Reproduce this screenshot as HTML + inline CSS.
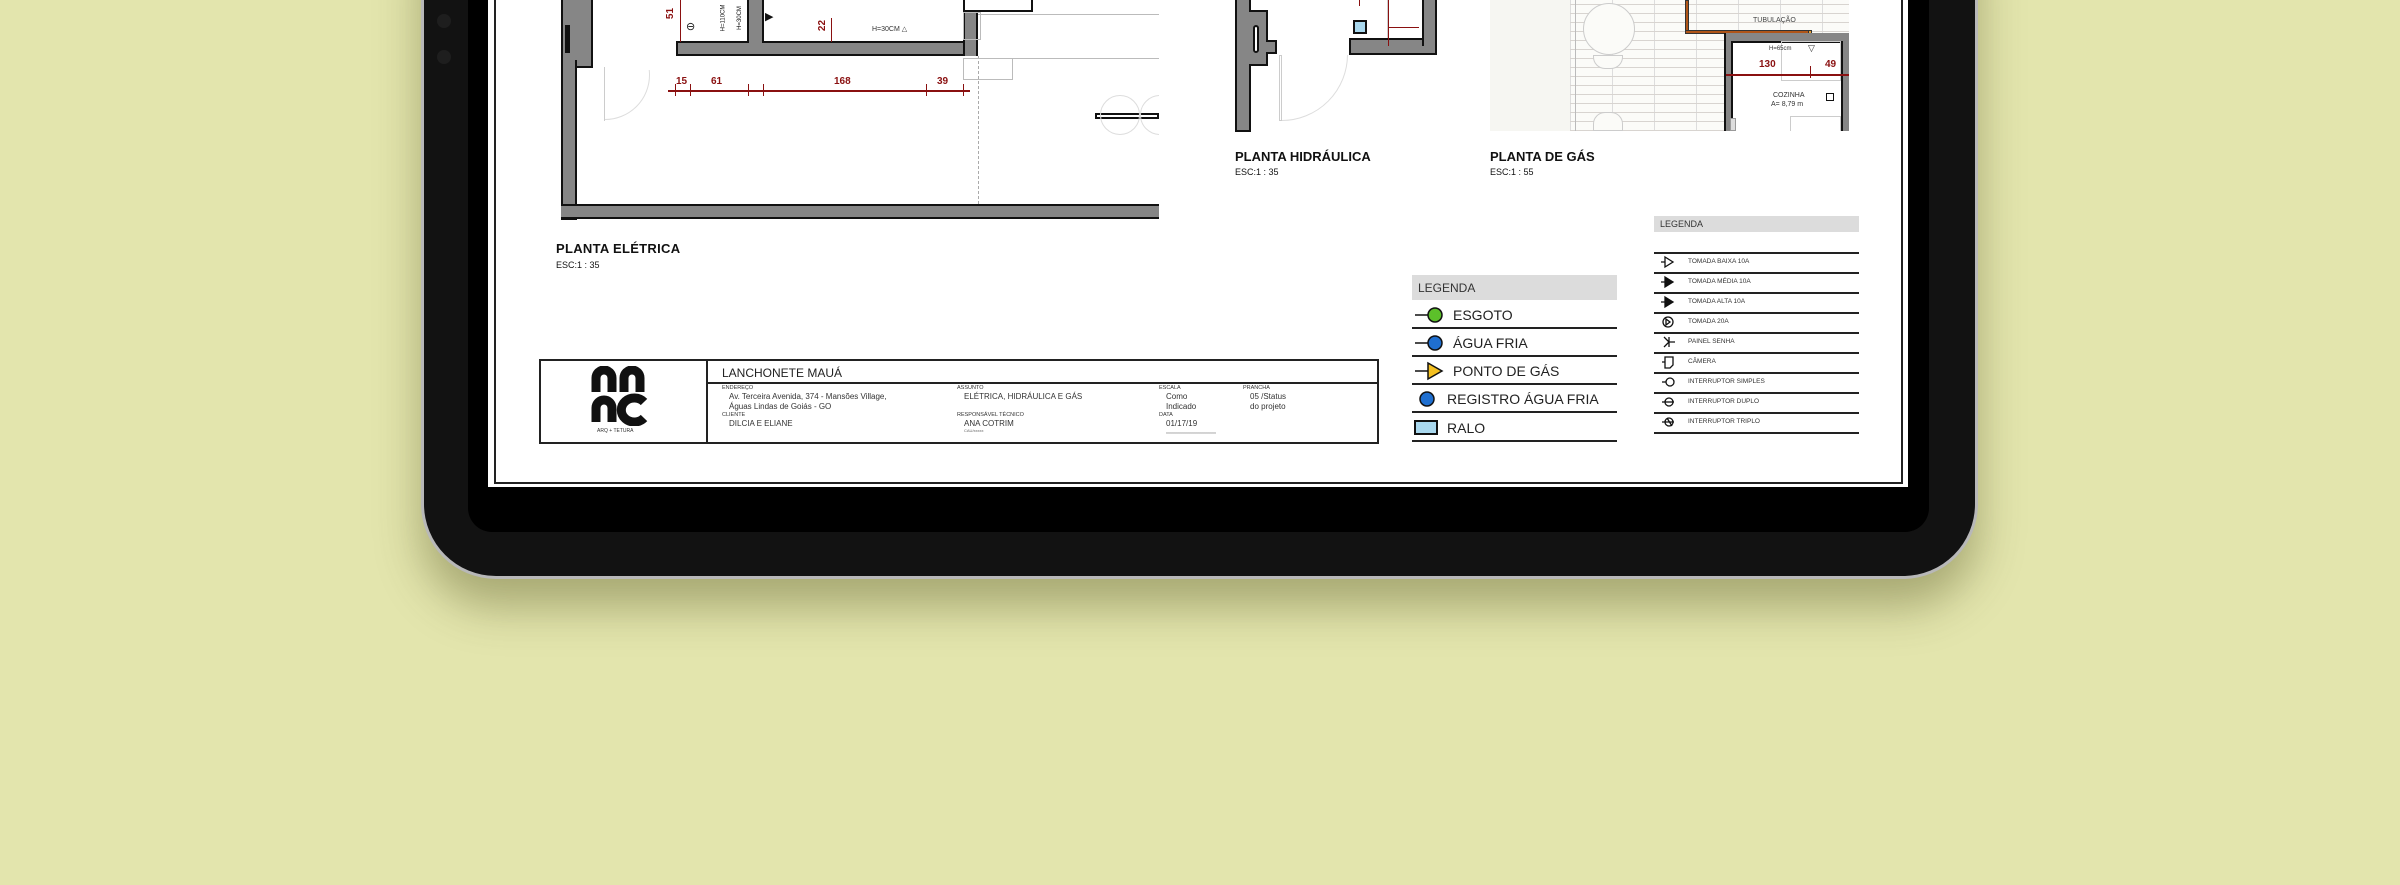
<!DOCTYPE html>
<html><head><meta charset="utf-8"><style>
*{margin:0;padding:0;box-sizing:border-box}
body{width:2400px;height:885px;background:#e3e5ad;position:relative;overflow:hidden;font-family:"Liberation Sans",sans-serif}
.a{position:absolute}
.wall{position:absolute;background:#868686;border:2px solid #111}
.t{position:absolute;white-space:nowrap;color:#111}
.red{color:#8a1010;font-weight:bold}
</style></head><body>
<!-- tablet body -->
<div class="a" style="left:421px;top:-120px;width:1557px;height:699px;border-radius:75px;background:#b8b8b8;box-shadow:0 28px 45px rgba(70,72,20,0.38)"></div>
<div class="a" style="left:424px;top:-120px;width:1551px;height:696px;border-radius:72px;background:#121212;"></div>
<div class="a" style="left:437px;top:14px;width:14px;height:14px;border-radius:50%;background:#1e1e1e"></div>
<div class="a" style="left:437px;top:50px;width:14px;height:14px;border-radius:50%;background:#1e1e1e"></div>
<!-- bezel -->
<div class="a" style="left:468px;top:-50px;width:1461px;height:582px;border-radius:24px;background:#000"></div>
<!-- screen -->
<div class="a" style="left:488px;top:0;width:1420px;height:487px;background:#fff"></div>
<div class="a" style="left:494px;top:-5px;width:1409px;height:489px;border:2px solid #222;border-top:none"></div>

<!-- ELETRICA plan -->
<div class="wall" style="left:561px;top:-4px;width:32px;height:72px;border-right:2px solid #111"></div>
<div class="wall" style="left:561px;top:60px;width:16px;height:160px;border-top:none"></div>
<div class="a" style="left:565px;top:25px;width:5px;height:28px;background:#111"></div>
<div class="wall" style="left:561px;top:204px;width:598px;height:15px;border-right:none;border-left:none"></div>
<div class="wall" style="left:676px;top:41px;width:302px;height:15px"></div>
<div class="wall" style="left:963px;top:10px;width:15px;height:46px;border-bottom:none"></div>
<div class="wall" style="left:747px;top:-4px;width:17px;height:47px;border-bottom:none"></div>
<div class="a" style="left:978px;top:56px;width:0;height:148px;border-left:1px dashed #aaa"></div>
<div class="a" style="left:978px;top:14px;width:181px;height:1px;background:#bbb"></div>
<div class="a" style="left:978px;top:58px;width:181px;height:1px;background:#bbb"></div>
<div class="a" style="left:963px;top:58px;width:50px;height:22px;border:1px solid #bbb"></div>
<div class="a" style="left:963px;top:12px;width:18px;height:28px;border:1px solid #bbb"></div>
<div class="a" style="left:963px;top:-2px;width:70px;height:14px;border:2px solid #111;background:#fff"></div>
<div class="a" style="left:604px;top:67px;width:1px;height:54px;background:#ccc"></div>
<div class="a" style="left:560px;top:30px;width:90px;height:90px;border-radius:50%;border:1px solid #ddd;clip-path:inset(40px 0 0 45px)"></div>
<!-- dim line -->
<div class="a" style="left:668px;top:90px;width:302px;height:2px;background:#8a1010"></div>
<div class="a" style="left:675px;top:84px;width:1px;height:12px;background:#8a1010"></div>
<div class="a" style="left:690px;top:84px;width:1px;height:12px;background:#8a1010"></div>
<div class="a" style="left:748px;top:84px;width:1px;height:12px;background:#8a1010"></div>
<div class="a" style="left:763px;top:84px;width:1px;height:12px;background:#8a1010"></div>
<div class="a" style="left:926px;top:84px;width:1px;height:12px;background:#8a1010"></div>
<div class="a" style="left:963px;top:84px;width:1px;height:12px;background:#8a1010"></div>
<div class="t red" style="left:676px;top:76px;font-size:10px">15</div>
<div class="t red" style="left:711px;top:76px;font-size:10px">61</div>
<div class="t red" style="left:834px;top:76px;font-size:10px">168</div>
<div class="t red" style="left:937px;top:76px;font-size:10px">39</div>
<div class="a" style="left:680px;top:0;width:1px;height:42px;background:#8a1010"></div>
<div class="t red" style="left:665px;top:8px;font-size:10px;transform:rotate(-90deg)">51</div>
<div class="a" style="left:831px;top:18px;width:1px;height:24px;background:#8a1010"></div>
<div class="t red" style="left:817px;top:20px;font-size:10px;transform:rotate(-90deg)">22</div>
<div class="t" style="left:710px;top:15px;font-size:6px;transform:rotate(-90deg)">H=110CM</div>
<div class="t" style="left:728px;top:15px;font-size:6px;transform:rotate(-90deg)">H=30CM</div>
<div class="t" style="left:872px;top:25px;font-size:7px;color:#333">H=30CM △</div>
<div class="t" style="left:686px;top:20px;font-size:11px">⊖</div>
<div class="t" style="left:765px;top:10px;font-size:11px">▶</div>
<div class="a" style="left:1095px;top:113px;width:64px;height:6px;border:2px solid #111"></div>
<div class="a" style="left:1100px;top:95px;width:40px;height:40px;border-radius:50%;border:1px solid #ddd"></div>
<div class="a" style="left:1140px;top:95px;width:40px;height:40px;border-radius:50%;border:1px solid #ddd;clip-path:inset(0 21px 0 0)"></div>
<div class="t" style="left:556px;top:241px;font-size:13px;font-weight:bold;letter-spacing:0.3px">PLANTA ELÉTRICA</div>
<div class="t" style="left:556px;top:260px;font-size:9px">ESC:1 : 35</div>

<!-- HIDRAULICA -->
<div class="wall" style="left:1235px;top:-4px;width:16px;height:136px"></div>
<div class="wall" style="left:1249px;top:10px;width:19px;height:56px;border-left:none"></div>
<div class="a" style="left:1253px;top:25px;width:6px;height:28px;border:2px solid #111;border-radius:3px;background:#fff"></div>
<div class="a" style="left:1266px;top:40px;width:11px;height:14px;background:#868686;border:2px solid #111;border-left:none"></div>
<div class="a" style="left:1279px;top:55px;width:3px;height:66px;border:1px solid #ccc"></div>
<div class="a" style="left:1215px;top:-12px;width:133px;height:133px;border-radius:50%;border:1px solid #ddd;clip-path:inset(67px 0 0 67px)"></div>
<div class="wall" style="left:1349px;top:38px;width:88px;height:17px"></div>
<div class="wall" style="left:1422px;top:-4px;width:15px;height:50px;border-bottom:none"></div>
<div class="a" style="left:1353px;top:20px;width:14px;height:14px;border:2px solid #111;background:#a9d8ee"></div>
<div class="a" style="left:1387px;top:0;width:34px;height:38px;border-left:1px solid #ccc"></div>
<div class="a" style="left:1389px;top:27px;width:30px;height:1px;background:#8a1010"></div>
<div class="a" style="left:1388px;top:0;width:1px;height:46px;background:#8a1010"></div>
<div class="a" style="left:1359px;top:0;width:1px;height:6px;background:#8a1010"></div>
<div class="t" style="left:1235px;top:149px;font-size:13px;font-weight:bold">PLANTA HIDRÁULICA</div>
<div class="t" style="left:1235px;top:167px;font-size:9px">ESC:1 : 35</div>

<!-- GAS -->
<div class="a" style="left:1490px;top:0;width:359px;height:131px;background:#f6f6f2;overflow:hidden">
 <div class="a" style="left:80px;top:0;width:279px;height:131px;background-color:#fbfbf8;background-image:repeating-linear-gradient(0deg,#d8d4d0 0 1px,transparent 1px 9px),repeating-linear-gradient(90deg,#ddd 0 1px,transparent 1px 42px)"></div>
 <div class="a" style="left:85px;top:0;width:1px;height:131px;background:#bbb"></div>
 <div class="a" style="left:93px;top:3px;width:52px;height:52px;border-radius:50%;border:1px solid #ccc;background:#fbfbf8"></div>
 <div class="a" style="left:103px;top:55px;width:30px;height:14px;border:1px solid #ccc;border-radius:0 0 12px 12px;background:#fbfbf8"></div>
 <div class="a" style="left:103px;top:112px;width:30px;height:19px;border:1px solid #ccc;border-radius:12px 12px 0 0;background:#fbfbf8"></div>
 <div class="a" style="left:195px;top:0;width:4px;height:34px;background:#b05518;border:1px solid #333"></div>
 <div class="a" style="left:195px;top:30px;width:126px;height:4px;background:#b05518;border:1px solid #333"></div>
 <div class="a" style="left:318px;top:30px;width:4px;height:12px;background:#e8a030;border:1px solid #333"></div>
 <div class="t" style="left:263px;top:17px;font-size:7px;color:#444">TUBULAÇÃO</div>
 <div class="a" style="left:234px;top:33px;width:125px;height:100px;background:#868686;border-left:2px solid #111"></div>
 <div class="a" style="left:241px;top:41px;width:112px;height:92px;background:#fff;border:2px solid #111;border-bottom:none"></div>
 <div class="a" style="left:291px;top:41px;width:60px;height:40px;border:1px solid #ccc"></div>
 <div class="t" style="left:279px;top:46px;font-size:6px;color:#333">H=65cm</div>
 <div class="t" style="left:318px;top:43px;font-size:9px;color:#333">▽</div>
 <div class="a" style="left:236px;top:74px;width:123px;height:2px;background:#8a1010"></div>
 <div class="a" style="left:320px;top:66px;width:1px;height:12px;background:#8a1010"></div>
 <div class="t red" style="left:269px;top:59px;font-size:10px">130</div>
 <div class="t red" style="left:335px;top:59px;font-size:10px">49</div>
 <div class="t" style="left:283px;top:92px;font-size:7px;color:#333">COZINHA</div>
 <div class="t" style="left:281px;top:101px;font-size:7px;color:#333">A= 8,79 m</div>
 <div class="a" style="left:336px;top:93px;width:8px;height:8px;border:1px solid #111"></div>
 <div class="a" style="left:300px;top:116px;width:51px;height:17px;border:1px solid #ccc"></div>
 <div class="a" style="left:240px;top:118px;width:6px;height:13px;background:#ddd;border:1px solid #999"></div>
</div>
<div class="t" style="left:1490px;top:149px;font-size:13px;font-weight:bold">PLANTA DE GÁS</div>
<div class="t" style="left:1490px;top:167px;font-size:9px">ESC:1 : 55</div>

<!-- LEGENDA 1 -->
<div class="a" style="left:1412px;top:275px;width:205px;height:25px;background:#dcdcdc"></div>
<div class="t" style="left:1418px;top:281px;font-size:12px;color:#333">LEGENDA</div>
<div class="a" style="left:1412px;top:327px;width:205px;height:2px;background:#222"></div>
<div class="a" style="left:1412px;top:355px;width:205px;height:2px;background:#222"></div>
<div class="a" style="left:1412px;top:383px;width:205px;height:2px;background:#222"></div>
<div class="a" style="left:1412px;top:411px;width:205px;height:2px;background:#222"></div>
<div class="a" style="left:1412px;top:440px;width:205px;height:2px;background:#222"></div>
<svg class="a" style="left:1412px;top:300px" width="40" height="140">
 <line x1="3" y1="15" x2="16" y2="15" stroke="#111" stroke-width="1.5"/><circle cx="23" cy="15" r="7" fill="#5cc02a" stroke="#111" stroke-width="1.5"/>
 <line x1="3" y1="43" x2="16" y2="43" stroke="#111" stroke-width="1.5"/><circle cx="23" cy="43" r="7" fill="#1f6fd0" stroke="#111" stroke-width="1.5"/>
 <line x1="3" y1="71" x2="16" y2="71" stroke="#111" stroke-width="1.5"/><polygon points="16,63 30,71 16,79" fill="#f4c020" stroke="#111" stroke-width="1.5"/>
 <circle cx="15" cy="99" r="7" fill="#1f6fd0" stroke="#111" stroke-width="1.5"/>
 <rect x="3" y="121" width="22" height="13" fill="#a9d8ee" stroke="#111" stroke-width="2"/>
</svg>
<div class="t" style="left:1453px;top:307px;font-size:14px;color:#222">ESGOTO</div>
<div class="t" style="left:1453px;top:335px;font-size:14px;color:#222">ÁGUA FRIA</div>
<div class="t" style="left:1453px;top:363px;font-size:14px;color:#222">PONTO DE GÁS</div>
<div class="t" style="left:1447px;top:391px;font-size:14px;color:#222">REGISTRO ÁGUA FRIA</div>
<div class="t" style="left:1447px;top:420px;font-size:14px;color:#222">RALO</div>

<!-- LEGENDA 2 -->
<div class="a" style="left:1654px;top:216px;width:205px;height:16px;background:#dcdcdc"></div>
<div class="t" style="left:1660px;top:219px;font-size:9px;color:#333">LEGENDA</div>
<div class="a" style="left:1654px;top:252px;width:205px;height:1.5px;background:#222"></div>
<div class="a" style="left:1654px;top:272px;width:205px;height:1.5px;background:#222"></div>
<div class="a" style="left:1654px;top:292px;width:205px;height:1.5px;background:#222"></div>
<div class="a" style="left:1654px;top:312px;width:205px;height:1.5px;background:#222"></div>
<div class="a" style="left:1654px;top:332px;width:205px;height:1.5px;background:#222"></div>
<div class="a" style="left:1654px;top:352px;width:205px;height:1.5px;background:#222"></div>
<div class="a" style="left:1654px;top:372px;width:205px;height:1.5px;background:#222"></div>
<div class="a" style="left:1654px;top:392px;width:205px;height:1.5px;background:#222"></div>
<div class="a" style="left:1654px;top:412px;width:205px;height:1.5px;background:#222"></div>
<div class="a" style="left:1654px;top:432px;width:205px;height:1.5px;background:#222"></div>
<svg class="a" style="left:1656px;top:253px" width="24" height="180" fill="none" stroke="#111" stroke-width="1.3">
 <path d="M5 9h4M9 4v10l8-5z"/>
 <path d="M5 29h4M9 24v10l8-5z" fill="#111"/>
 <path d="M5 49h4M9 44v10l8-5z" fill="#111"/>
 <circle cx="12" cy="69" r="5"/><path d="M10 66v6l4-3z"/>
 <path d="M8 84l5 5-5 5M13 89h6M13 84v10"/>
 <path d="M6 109h3M9 104h8v8l-3 3h-5z"/>
 <path d="M6 129h4"/><circle cx="14" cy="129" r="4"/>
 <path d="M6 149h12"/><circle cx="13" cy="149" r="4"/>
 <path d="M6 169h12M11 165l5 8"/><circle cx="13" cy="169" r="4"/>
</svg>
<div class="t" style="left:1688px;top:258px;font-size:6.5px;color:#333">TOMADA BAIXA 10A</div>
<div class="t" style="left:1688px;top:278px;font-size:6.5px;color:#333">TOMADA MÉDIA 10A</div>
<div class="t" style="left:1688px;top:298px;font-size:6.5px;color:#333">TOMADA ALTA 10A</div>
<div class="t" style="left:1688px;top:318px;font-size:6.5px;color:#333">TOMADA 20A</div>
<div class="t" style="left:1688px;top:338px;font-size:6.5px;color:#333">PAINEL SENHA</div>
<div class="t" style="left:1688px;top:358px;font-size:6.5px;color:#333">CÂMERA</div>
<div class="t" style="left:1688px;top:378px;font-size:6.5px;color:#333">INTERRUPTOR SIMPLES</div>
<div class="t" style="left:1688px;top:398px;font-size:6.5px;color:#333">INTERRUPTOR DUPLO</div>
<div class="t" style="left:1688px;top:418px;font-size:6.5px;color:#333">INTERRUPTOR TRIPLO</div>

<!-- TITLE BLOCK -->
<div class="a" style="left:539px;top:359px;width:840px;height:85px;border:2px solid #222"></div>
<div class="a" style="left:706px;top:359px;width:1.5px;height:85px;background:#222"></div>
<div class="a" style="left:706px;top:382px;width:673px;height:1.5px;background:#222"></div>
<svg class="a" style="left:590px;top:366px" width="60" height="60">
 <path d="M6 26V12a8 8 0 0 1 16 0v14M34 26V12a8 8 0 0 1 16 0v14" stroke="#111" stroke-width="9" fill="none"/>
 <path d="M6 56V42a8 8 0 0 1 16 0v14" stroke="#111" stroke-width="9" fill="none"/>
 <path d="M54 36a13 12 0 1 0 0 16" stroke="#111" stroke-width="9" fill="none"/>
 <path d="M45 44h9" stroke="#fff" stroke-width="2"/>
</svg>
<div class="t" style="left:597px;top:428px;font-size:5px;color:#333">ARQ + TETURA</div>
<div class="t" style="left:722px;top:366px;font-size:12px;color:#222">LANCHONETE MAUÁ</div>
<div class="t" style="left:722px;top:385px;font-size:5.5px;color:#333">ENDEREÇO</div>
<div class="t" style="left:729px;top:392px;font-size:8px;color:#333">Av. Terceira Avenida, 374 - Mansões Village,</div>
<div class="t" style="left:729px;top:402px;font-size:8px;color:#333">Águas Lindas de Goiás - GO</div>
<div class="t" style="left:722px;top:412px;font-size:5.5px;color:#333">CLIENTE</div>
<div class="t" style="left:729px;top:419px;font-size:8px;color:#333">DILCIA E ELIANE</div>
<div class="t" style="left:957px;top:385px;font-size:5.5px;color:#333">ASSUNTO</div>
<div class="t" style="left:964px;top:392px;font-size:8px;color:#333">ELÉTRICA, HIDRÁULICA E GÁS</div>
<div class="t" style="left:957px;top:412px;font-size:5.5px;color:#333">RESPONSÁVEL TÉCNICO</div>
<div class="t" style="left:964px;top:419px;font-size:8px;color:#333">ANA COTRIM</div>
<div class="t" style="left:964px;top:428px;font-size:4px;color:#666">CAU/xxxxx</div>
<div class="t" style="left:1159px;top:385px;font-size:5.5px;color:#333">ESCALA</div>
<div class="t" style="left:1166px;top:392px;font-size:8px;color:#333">Como</div>
<div class="t" style="left:1166px;top:402px;font-size:8px;color:#333">Indicado</div>
<div class="t" style="left:1159px;top:412px;font-size:5.5px;color:#333">DATA</div>
<div class="t" style="left:1166px;top:419px;font-size:8px;color:#333">01/17/19</div>
<div class="t" style="left:1166px;top:430px;font-size:4px;color:#888">xxxxxxxxxxxxxxxxxxxxxxxxx</div>
<div class="t" style="left:1243px;top:385px;font-size:5.5px;color:#333">PRANCHA</div>
<div class="t" style="left:1250px;top:392px;font-size:8px;color:#333">05 /Status</div>
<div class="t" style="left:1250px;top:402px;font-size:8px;color:#333">do projeto</div>
</body></html>
